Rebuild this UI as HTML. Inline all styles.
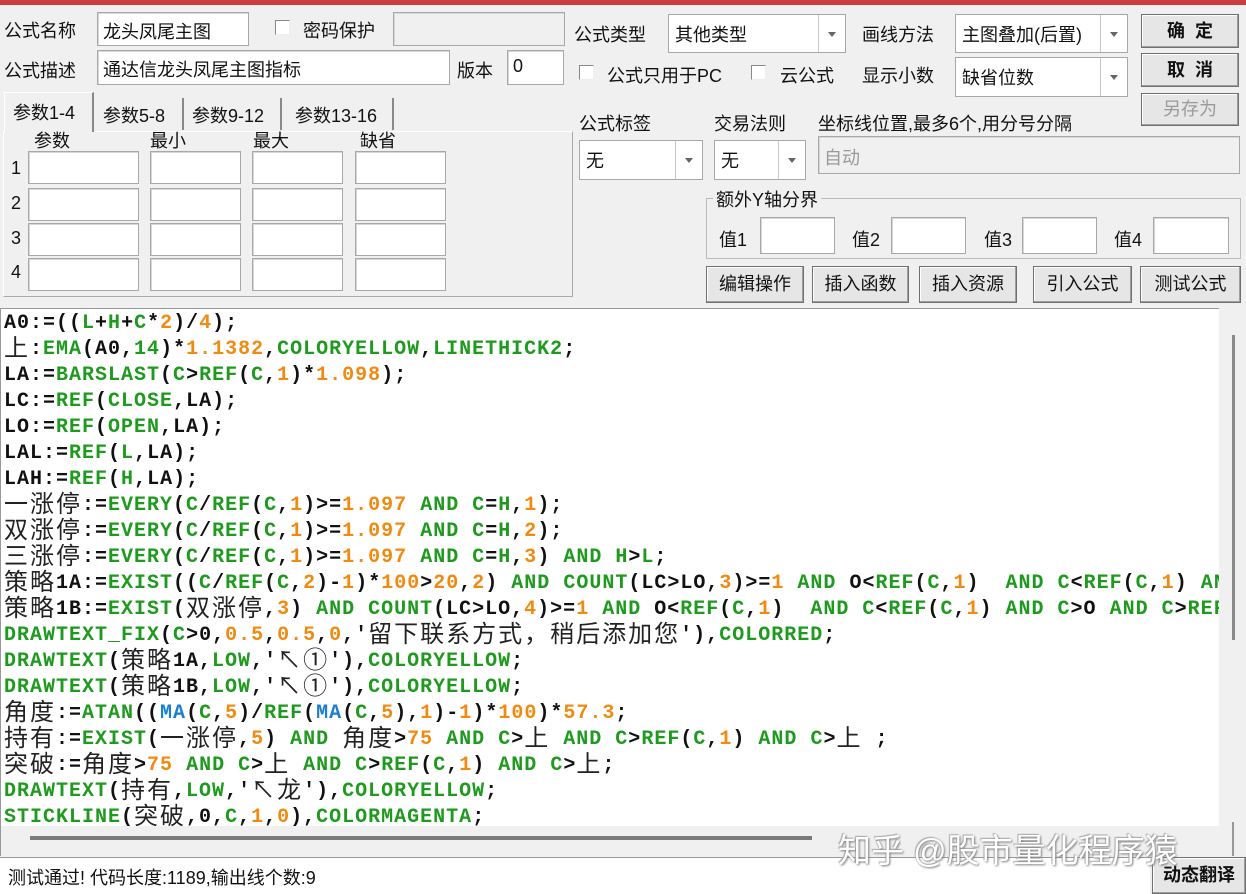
<!DOCTYPE html>
<html><head><meta charset="utf-8">
<style>
*{box-sizing:border-box;margin:0;padding:0}
body{width:1246px;height:894px;background:#f0f0f0;position:relative;overflow:hidden;font-family:"Liberation Sans","Noto Sans CJK SC",sans-serif;font-size:18px;color:#111}
.a{position:absolute;white-space:nowrap}
.in{position:absolute;background:#fff;border:1px solid #a8a8a8;box-shadow:inset 1px 1px 0 #d8d8d8}
.dis{background:#f0f0f0}
.cb{position:absolute;width:15px;height:15px;border:1px solid #888;background:#fff;border-right-color:#eee;border-bottom-color:#eee}
.sel{position:absolute;background:#fff;border:1px solid #a8a8a8}
.sel .ar{position:absolute;right:0;top:0;bottom:0;width:27px;border-left:1px solid #c8c8c8}
.sel .ar:after{content:"";position:absolute;left:9px;top:50%;margin-top:-2px;border:4px solid transparent;border-top:5px solid #666;border-bottom:0}
.sel span{position:absolute;left:6px;top:50%;transform:translateY(-50%)}
.btn{position:absolute;border:1px solid #707070;background:#e6e6e6;text-align:center;box-shadow:inset -1px -1px 0 #a0a0a0,inset 1px 1px 0 #fff}
.code{position:absolute;left:0;top:308px;width:1219px;height:518px;background:#fff;overflow:hidden;border-left:1px solid #999;border-top:1px solid #999}
.code div{height:26px;line-height:26px;overflow:visible;white-space:pre;font-family:"Liberation Mono","Noto Sans CJK SC",monospace;font-weight:bold;font-size:20px;letter-spacing:1px;padding-left:3px;color:#111;position:relative;top:2px}
.g{color:#1e9a1e}.o{color:#f08a10}.b{color:#1a7fd0}
.z{font-family:"Noto Sans CJK SC",sans-serif;font-weight:normal;font-size:24px;letter-spacing:2px;color:#222;display:inline-block;height:26px;line-height:26px;vertical-align:top;position:relative;top:-4px}
</style></head><body>
<div class="a" style="left:0;top:0;width:1246px;height:5px;background:#cc3c40"></div>

<div class="a" style="left:4px;top:17px">公式名称</div>
<div class="in" style="left:97px;top:12px;width:152px;height:34px"><span class="a" style="left:5px;top:5px">龙头凤尾主图</span></div>
<div class="cb" style="left:275px;top:20px"></div>
<div class="a" style="left:303px;top:17px">密码保护</div>
<div class="in dis" style="left:393px;top:12px;width:172px;height:34px"></div>

<div class="a" style="left:4px;top:57px">公式描述</div>
<div class="in" style="left:97px;top:50px;width:353px;height:35px"><span class="a" style="left:5px;top:5px">通达信龙头凤尾主图指标</span></div>
<div class="a" style="left:457px;top:57px">版本</div>
<div class="in" style="left:507px;top:50px;width:57px;height:35px"><span class="a" style="left:5px;top:5px">0</span></div>

<div class="a" style="left:3px;top:131px;width:570px;height:166px;border:1px solid #aaa;border-top-color:#fff;border-left-color:#fff;background:#f0f0f0"></div>
<div class="a" style="left:4px;top:92px;width:90px;height:40px;background:#f0f0f0;border:1px solid #fff;border-right:2px solid #888;border-bottom:none"></div>
<div class="a" style="left:13px;top:99px">参数1-4</div>
<div class="a" style="left:96px;top:98px;width:88px;height:32px;border-right:2px solid #888"></div>
<div class="a" style="left:103px;top:102px">参数5-8</div>
<div class="a" style="left:186px;top:98px;width:96px;height:32px;border-right:2px solid #888"></div>
<div class="a" style="left:192px;top:102px">参数9-12</div>
<div class="a" style="left:288px;top:98px;width:106px;height:32px;border-right:2px solid #888"></div>
<div class="a" style="left:295px;top:102px">参数13-16</div>
<div class="a" style="left:34px;top:127px">参数</div>
<div class="a" style="left:150px;top:127px">最小</div>
<div class="a" style="left:253px;top:127px">最大</div>
<div class="a" style="left:360px;top:127px">缺省</div>
<div class="a" style="left:11px;top:158px">1</div>
<div class="a" style="left:11px;top:193px">2</div>
<div class="a" style="left:11px;top:228px">3</div>
<div class="a" style="left:11px;top:262px">4</div>
<div class="in" style="left:28px;top:151px;width:111px;height:33px"></div><div class="in" style="left:150px;top:151px;width:91px;height:33px"></div><div class="in" style="left:252px;top:151px;width:91px;height:33px"></div><div class="in" style="left:355px;top:151px;width:91px;height:33px"></div>
<div class="in" style="left:28px;top:188px;width:111px;height:33px"></div><div class="in" style="left:150px;top:188px;width:91px;height:33px"></div><div class="in" style="left:252px;top:188px;width:91px;height:33px"></div><div class="in" style="left:355px;top:188px;width:91px;height:33px"></div>
<div class="in" style="left:28px;top:223px;width:111px;height:33px"></div><div class="in" style="left:150px;top:223px;width:91px;height:33px"></div><div class="in" style="left:252px;top:223px;width:91px;height:33px"></div><div class="in" style="left:355px;top:223px;width:91px;height:33px"></div>
<div class="in" style="left:28px;top:258px;width:111px;height:33px"></div><div class="in" style="left:150px;top:258px;width:91px;height:33px"></div><div class="in" style="left:252px;top:258px;width:91px;height:33px"></div><div class="in" style="left:355px;top:258px;width:91px;height:33px"></div>

<div class="a" style="left:574px;top:21px">公式类型</div>
<div class="sel" style="left:668px;top:14px;width:178px;height:39px"><span>其他类型</span><div class="ar"></div></div>
<div class="a" style="left:862px;top:21px">画线方法</div>
<div class="sel" style="left:955px;top:14px;width:173px;height:39px"><span>主图叠加(后置)</span><div class="ar"></div></div>
<div class="btn" style="left:1141px;top:14px;width:98px;height:34px;line-height:32px;font-weight:bold">确&nbsp;&nbsp;定</div>
<div class="btn" style="left:1141px;top:53px;width:98px;height:34px;line-height:32px;font-weight:bold">取&nbsp;&nbsp;消</div>
<div class="btn" style="left:1141px;top:93px;width:98px;height:33px;line-height:31px;color:#9a9a9a">另存为</div>

<div class="cb" style="left:579px;top:65px"></div>
<div class="a" style="left:607px;top:62px">公式只用于PC</div>
<div class="cb" style="left:751px;top:65px"></div>
<div class="a" style="left:780px;top:62px">云公式</div>
<div class="a" style="left:862px;top:62px">显示小数</div>
<div class="sel" style="left:955px;top:57px;width:173px;height:40px"><span>缺省位数</span><div class="ar"></div></div>

<div class="a" style="left:579px;top:110px">公式标签</div>
<div class="a" style="left:714px;top:110px">交易法则</div>
<div class="a" style="left:818px;top:110px">坐标线位置,最多6个,用分号分隔</div>
<div class="sel" style="left:579px;top:140px;width:124px;height:40px"><span>无</span><div class="ar"></div></div>
<div class="sel" style="left:714px;top:140px;width:92px;height:40px"><span>无</span><div class="ar"></div></div>
<div class="in dis" style="left:818px;top:136px;width:422px;height:38px"><span class="a" style="left:5px;top:7px;color:#999">自动</span></div>

<div class="a" style="left:706px;top:198px;width:535px;height:61px;border:1px solid #bbb"></div>
<div class="a" style="left:713px;top:186px;background:#f0f0f0;padding:0 3px">额外Y轴分界</div>
<div class="a" style="left:719px;top:226px">值1</div><div class="in" style="left:760px;top:217px;width:75px;height:37px"></div>
<div class="a" style="left:852px;top:226px">值2</div><div class="in" style="left:891px;top:217px;width:75px;height:37px"></div>
<div class="a" style="left:984px;top:226px">值3</div><div class="in" style="left:1022px;top:217px;width:75px;height:37px"></div>
<div class="a" style="left:1114px;top:226px">值4</div><div class="in" style="left:1153px;top:217px;width:76px;height:37px"></div>

<div class="btn" style="left:706px;top:266px;width:98px;height:37px;line-height:35px">编辑操作</div>
<div class="btn" style="left:812px;top:266px;width:97px;height:37px;line-height:35px">插入函数</div>
<div class="btn" style="left:919px;top:266px;width:98px;height:37px;line-height:35px">插入资源</div>
<div class="btn" style="left:1033px;top:266px;width:99px;height:37px;line-height:35px">引入公式</div>
<div class="btn" style="left:1140px;top:266px;width:101px;height:37px;line-height:35px">测试公式</div>

<div class="code">
<div>A0:=((<span class="g">L</span>+<span class="g">H</span>+<span class="g">C</span>*<span class="o">2</span>)/<span class="o">4</span>);</div>
<div><span class="z">上</span>:<span class="g">EMA</span>(A0,<span class="g">14</span>)*<span class="o">1.1382</span>,<span class="g">COLORYELLOW</span>,<span class="g">LINETHICK2</span>;</div>
<div>LA:=<span class="g">BARSLAST</span>(<span class="g">C</span>&gt;<span class="g">REF</span>(<span class="g">C</span>,<span class="o">1</span>)*<span class="o">1.098</span>);</div>
<div>LC:=<span class="g">REF</span>(<span class="g">CLOSE</span>,LA);</div>
<div>LO:=<span class="g">REF</span>(<span class="g">OPEN</span>,LA);</div>
<div>LAL:=<span class="g">REF</span>(<span class="g">L</span>,LA);</div>
<div>LAH:=<span class="g">REF</span>(<span class="g">H</span>,LA);</div>
<div><span class="z">一涨停</span>:=<span class="g">EVERY</span>(<span class="g">C</span>/<span class="g">REF</span>(<span class="g">C</span>,<span class="o">1</span>)&gt;=<span class="o">1.097</span> <span class="g">AND</span> <span class="g">C</span>=<span class="g">H</span>,<span class="o">1</span>);</div>
<div><span class="z">双涨停</span>:=<span class="g">EVERY</span>(<span class="g">C</span>/<span class="g">REF</span>(<span class="g">C</span>,<span class="o">1</span>)&gt;=<span class="o">1.097</span> <span class="g">AND</span> <span class="g">C</span>=<span class="g">H</span>,<span class="o">2</span>);</div>
<div><span class="z">三涨停</span>:=<span class="g">EVERY</span>(<span class="g">C</span>/<span class="g">REF</span>(<span class="g">C</span>,<span class="o">1</span>)&gt;=<span class="o">1.097</span> <span class="g">AND</span> <span class="g">C</span>=<span class="g">H</span>,<span class="o">3</span>) <span class="g">AND</span> <span class="g">H</span>&gt;<span class="g">L</span>;</div>
<div><span class="z">策略</span>1A:=<span class="g">EXIST</span>((<span class="g">C</span>/<span class="g">REF</span>(<span class="g">C</span>,<span class="o">2</span>)-<span class="o">1</span>)*<span class="o">100</span>&gt;<span class="o">20</span>,<span class="o">2</span>) <span class="g">AND</span> <span class="g">COUNT</span>(LC&gt;LO,<span class="o">3</span>)&gt;=<span class="o">1</span> <span class="g">AND</span> O&lt;<span class="g">REF</span>(<span class="g">C</span>,<span class="o">1</span>)  <span class="g">AND</span> <span class="g">C</span>&lt;<span class="g">REF</span>(<span class="g">C</span>,<span class="o">1</span>) <span class="g">AND</span></div>
<div><span class="z">策略</span>1B:=<span class="g">EXIST</span>(<span class="z">双涨停</span>,<span class="o">3</span>) <span class="g">AND</span> <span class="g">COUNT</span>(LC&gt;LO,<span class="o">4</span>)&gt;=<span class="o">1</span> <span class="g">AND</span> O&lt;<span class="g">REF</span>(<span class="g">C</span>,<span class="o">1</span>)  <span class="g">AND</span> <span class="g">C</span>&lt;<span class="g">REF</span>(<span class="g">C</span>,<span class="o">1</span>) <span class="g">AND</span> <span class="g">C</span>&gt;O <span class="g">AND</span> <span class="g">C</span>&gt;<span class="g">REF</span></div>
<div><span class="g">DRAWTEXT_FIX</span>(<span class="g">C</span>&gt;0,<span class="o">0.5</span>,<span class="o">0.5</span>,<span class="o">0</span>,'<span class="z">留下联系方式，稍后添加您</span>'),<span class="g">COLORRED</span>;</div>
<div><span class="g">DRAWTEXT</span>(<span class="z">策略</span>1A,<span class="g">LOW</span>,'<span class="z">↖①</span>'),<span class="g">COLORYELLOW</span>;</div>
<div><span class="g">DRAWTEXT</span>(<span class="z">策略</span>1B,<span class="g">LOW</span>,'<span class="z">↖①</span>'),<span class="g">COLORYELLOW</span>;</div>
<div><span class="z">角度</span>:=<span class="g">ATAN</span>((<span class="b">MA</span>(<span class="g">C</span>,<span class="o">5</span>)/<span class="g">REF</span>(<span class="b">MA</span>(<span class="g">C</span>,<span class="o">5</span>),<span class="o">1</span>)-<span class="o">1</span>)*<span class="o">100</span>)*<span class="o">57.3</span>;</div>
<div><span class="z">持有</span>:=<span class="g">EXIST</span>(<span class="z">一涨停</span>,<span class="o">5</span>) <span class="g">AND</span> <span class="z">角度</span>&gt;<span class="o">75</span> <span class="g">AND</span> <span class="g">C</span>&gt;<span class="z">上</span> <span class="g">AND</span> <span class="g">C</span>&gt;<span class="g">REF</span>(<span class="g">C</span>,<span class="o">1</span>) <span class="g">AND</span> <span class="g">C</span>&gt;<span class="z">上</span> ;</div>
<div><span class="z">突破</span>:=<span class="z">角度</span>&gt;<span class="o">75</span> <span class="g">AND</span> <span class="g">C</span>&gt;<span class="z">上</span> <span class="g">AND</span> <span class="g">C</span>&gt;<span class="g">REF</span>(<span class="g">C</span>,<span class="o">1</span>) <span class="g">AND</span> <span class="g">C</span>&gt;<span class="z">上</span>;</div>
<div><span class="g">DRAWTEXT</span>(<span class="z">持有</span>,<span class="g">LOW</span>,'<span class="z">↖龙</span>'),<span class="g">COLORYELLOW</span>;</div>
<div><span class="g">STICKLINE</span>(<span class="z">突破</span>,0,<span class="g">C</span>,<span class="o">1</span>,<span class="o">0</span>),<span class="g">COLORMAGENTA</span>;</div>
</div>
<div class="a" style="left:1232px;top:335px;width:3px;height:305px;background:#8a8a8a"></div>
<div class="a" style="left:0;top:826px;width:1219px;height:30px;background:#f0f0f0;border-left:1px solid #999"></div>
<div class="a" style="left:30px;top:836px;width:782px;height:4px;background:#7a7a7a"></div>
<div class="a" style="left:1232px;top:822px;width:2px;height:34px;background:#999"></div>

<div class="a" style="left:0;top:857px;width:1246px;height:1px;background:#999"></div>
<div class="a" style="left:0;top:858px;width:1150px;height:36px;background:#fff"></div>
<div class="a" style="left:8px;top:864px;font-size:18px">测试通过! 代码长度:1189,输出线个数:9</div>
<div class="btn" style="left:1152px;top:857px;width:94px;height:37px;line-height:35px;font-weight:bold">动态翻译</div>
<div class="a" style="left:838px;top:824px;font-size:33px;color:#fff;text-shadow:1px 1px 2px #777,-1px -1px 1px #aaa">知乎 @股市量化程序猿</div>
</body></html>
